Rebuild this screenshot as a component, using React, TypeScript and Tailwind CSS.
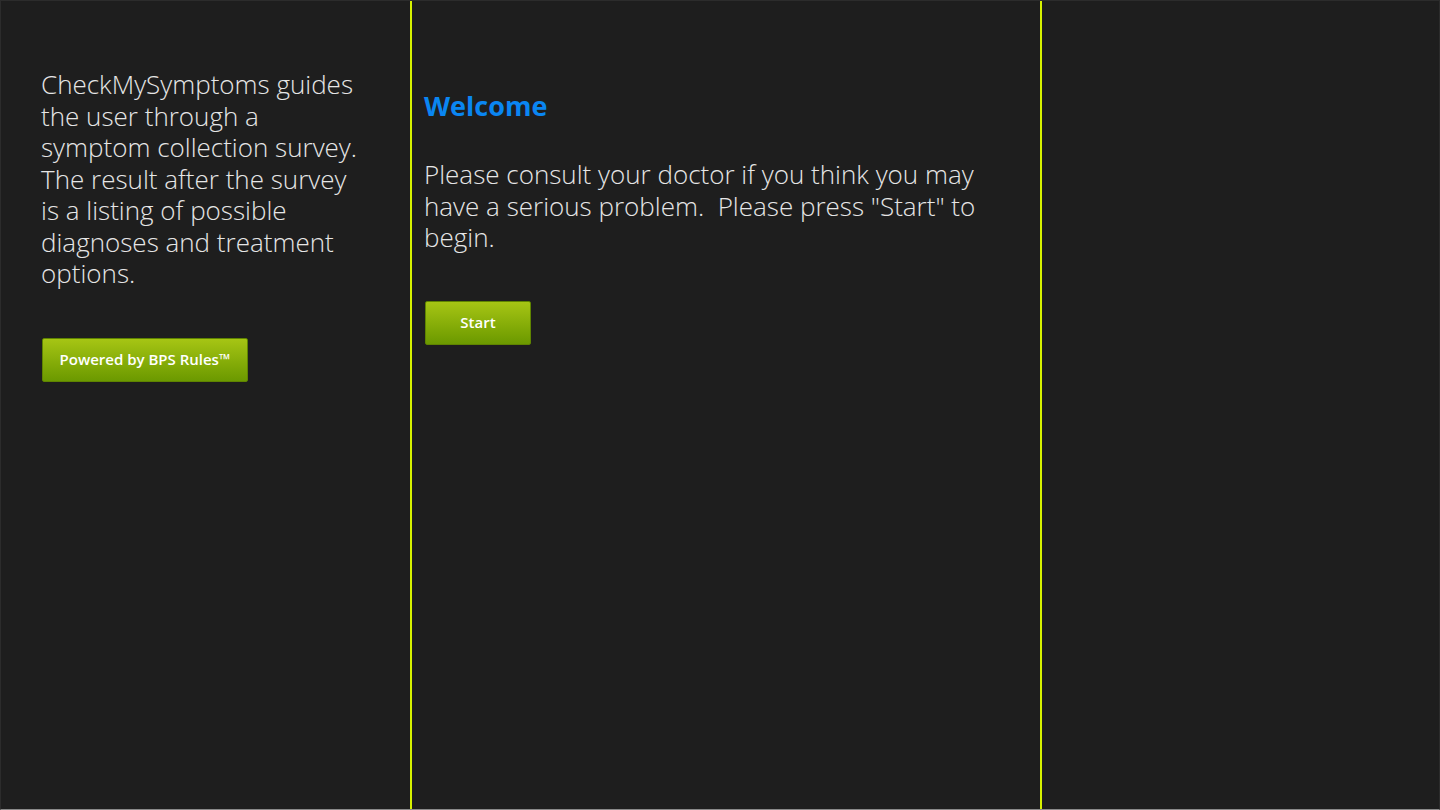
export default function App() {
  const font = { fontFamily: '"Open Sans", "Noto Sans", sans-serif' };
  return (
    <div
      className="flex h-[810px] w-[1440px] overflow-hidden border border-t-[#2c2c2c] border-l-[#2c2c2c] border-r-[#2c2c2c] border-b-[#8a8a8a] bg-[#1e1e1e] text-[#e6e6e6]"
      style={font}
    >
      {/* Intro column */}
      <div className="w-[409px] shrink-0 pl-10 pt-[68px]">
        <p className="text-[26px] font-light leading-[31.5px] whitespace-nowrap">
          <span className="block">CheckMySymptoms guides</span>
          <span className="block">the user through a</span>
          <span className="block">symptom collection survey.</span>
          <span className="block">The result after the survey</span>
          <span className="block">is a listing of possible</span>
          <span className="block">diagnoses and treatment</span>
          <span className="block">options.</span>
        </p>
        <button className="mt-[48px] ml-px h-[44px] w-[206px] rounded-[2px] border border-[#5f8400] bg-gradient-to-b from-[#a6c514] to-[#6b9900] text-[15px] font-semibold text-white">
          Powered by BPS Rules™
        </button>
      </div>

      <div className="w-[2px] shrink-0 bg-[#d6f200]" />

      {/* Welcome column */}
      <div className="w-[628px] shrink-0 pl-3 pt-[88px]">
        <h1 className="text-[27px] font-bold leading-[34px] text-[#0a86f2]">Welcome</h1>
        <p className="mt-[36px] text-[26px] font-light leading-[31.5px] whitespace-nowrap">
          <span className="block">Please consult your doctor if you think you may</span>
          <span className="block">have a serious problem.&nbsp; Please press "Start" to</span>
          <span className="block">begin.</span>
        </p>
        <button className="mt-[47px] ml-px h-[44px] w-[106px] rounded-[2px] border border-[#5f8400] bg-gradient-to-b from-[#a6c514] to-[#6b9900] text-[15px] font-semibold text-white">
          Start
        </button>
      </div>

      <div className="w-[2px] shrink-0 bg-[#d6f200]" />

      <div className="flex-1" />
    </div>
  );
}
